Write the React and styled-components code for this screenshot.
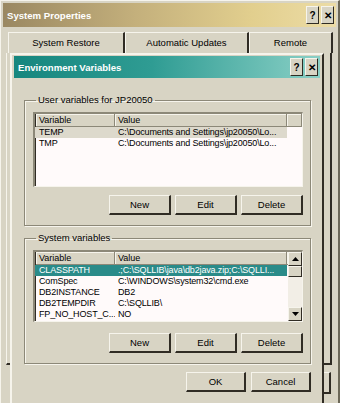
import React from 'react';
import styled, { createGlobalStyle } from 'styled-components';

const GlobalStyle = createGlobalStyle`
  html, body {
    margin: 0;
    padding: 0;
    background: #d8d4c4;
  }
  body {
    font-family: "Liberation Sans", Arial, sans-serif;
    font-size: 9px;
    color: #000;
  }
`;

const FACE = '#d8d4c4';
const LIGHT = '#f6f4ec';
const SHADOW = '#8c8878';
const DARK = '#302c24';

const OuterWindow = styled.div`
  position: relative;
  width: 340px;
  height: 403px;
  box-sizing: border-box;
  background: ${FACE};
  border-left: 1px solid ${LIGHT};
  border-top: 1px solid ${LIGHT};
  border-right: 2px solid #6c6858;
  padding: 2px 2px 0 2px;
  display: flex;
  flex-direction: column;
  overflow: hidden;
`;

const TitleBar = styled.div`
  height: ${p => p.$h}px;
  flex-shrink: 0;
  display: flex;
  align-items: center;
  padding: 0 2px 0 3px;
  background: ${p => p.$teal
    ? 'linear-gradient(90deg, #16867e 0%, #2f9c93 45%, #8ad0c6 100%)'
    : 'linear-gradient(90deg, #9a8862 0%, #c4b07c 40%, #e2cf8e 75%, #ecdca6 100%)'};
`;

const TitleText = styled.span`
  flex: 1;
  color: #fff;
  font-weight: bold;
  font-size: 9.6px;
  padding-left: 1px;
`;

const CaptionButton = styled.div`
  width: 13px;
  height: 18px;
  margin-left: 2px;
  box-sizing: border-box;
  background: ${FACE};
  border-top: 1px solid ${LIGHT};
  border-left: 1px solid ${LIGHT};
  border-right: 1px solid ${DARK};
  border-bottom: 1px solid ${DARK};
  display: flex;
  align-items: center;
  justify-content: center;
  font-weight: bold;
  font-size: 10px;
  color: #000;
`;

const TabRow = styled.div`
  height: 21px;
  margin-top: 5px;
  display: flex;
  padding-left: 5px;
  flex-shrink: 0;
`;

const Tab = styled.div`
  width: ${p => p.$w}px;
  box-sizing: border-box;
  border-top: 1px solid ${LIGHT};
  border-left: 1px solid ${LIGHT};
  border-right: 2px solid ${DARK};
  display: flex;
  align-items: center;
  justify-content: center;
  padding-bottom: 2px;
  font-size: 9.5px;
`;

const TabPage = styled.div`
  height: 312px;
  margin: 0 4px 0 3px;
  box-sizing: border-box;
  border-left: 1px solid ${LIGHT};
  border-right: 2px solid ${DARK};
  border-bottom: 2px solid ${DARK};
  flex-shrink: 0;
`;

const PageButtons = styled.div`
  display: flex;
  justify-content: flex-end;
  margin: 7px 5px 0 0;
`;

const PageButton = styled.div`
  width: 80px;
  height: 22px;
  box-sizing: border-box;
  border-left: 1px solid ${LIGHT};
  border-top: 1px solid ${LIGHT};
  border-right: 2px solid ${DARK};
  border-bottom: 2px solid ${DARK};
`;

const Dialog = styled.div`
  position: absolute;
  left: 9px;
  top: 52px;
  width: 314px;
  height: 352px;
  box-sizing: border-box;
  background: ${FACE};
  border-left: 2px solid ${LIGHT};
  border-top: 2px solid ${LIGHT};
  border-right: 2px solid ${DARK};
  border-bottom: 2px solid ${DARK};
  padding: 1px 2px 2px 2px;
  display: flex;
  flex-direction: column;
`;

const DialogBody = styled.div`
  padding: 17px 9px 0 10px;
  display: flex;
  flex-direction: column;
`;

const Group = styled.fieldset`
  margin: 0 0 ${p => p.$mb}px 0;
  padding: 7px 7px 10px 8px;
  border: 1px solid ${SHADOW};
  box-shadow: inset 1px 1px 0 ${LIGHT}, 1px 1px 0 ${LIGHT};
  display: flex;
  flex-direction: column;
  min-width: 0;
`;

const Legend = styled.legend`
  padding: 0 2px 0 2px;
  margin-left: 3px;
  font-size: 9.5px;
  line-height: 10px;
`;

const ListView = styled.div`
  position: relative;
  height: ${p => p.$h}px;
  box-sizing: border-box;
  background: #fffafa;
  border-top: 2px solid ${SHADOW};
  border-left: 2px solid ${SHADOW};
  border-right: 1px solid ${LIGHT};
  border-bottom: 1px solid ${LIGHT};
  box-shadow: inset 1px 1px 0 ${DARK};
  overflow: hidden;
`;

const HeaderRow = styled.div`
  display: grid;
  grid-template-columns: 79px 172px 1fr;
  height: 13px;
  padding-left: 1px;
`;

const HeaderCell = styled.div`
  height: 13px;
  box-sizing: border-box;
  background: ${FACE};
  border-right: 1px solid ${SHADOW};
  border-bottom: 1px solid ${SHADOW};
  box-shadow: inset 1px 1px 0 ${LIGHT};
  padding-left: 3px;
  line-height: 12px;
  font-size: 9px;
  white-space: nowrap;
  overflow: hidden;
`;

const Row = styled.div`
  display: grid;
  grid-template-columns: 79px 172px;
  height: 11px;
  line-height: 11px;
  padding-left: 1px;
  font-size: 9px;
  letter-spacing: -0.15px;
  width: 251px;
  background: ${p => (p.$sel === 'focus' ? '#2a8b89' : p.$sel === 'gray' ? '#ddd9cc' : 'transparent')};
  color: ${p => (p.$sel === 'focus' ? '#fff' : '#000')};
`;

const Cell = styled.div`
  padding-left: 3px;
  white-space: nowrap;
  overflow: hidden;
`;

const ScrollBar = styled.div`
  position: absolute;
  right: 0;
  top: 0;
  bottom: 0;
  width: 14px;
  background: #f2eee6;
  display: flex;
  flex-direction: column;
  justify-content: space-between;
`;

const ScrollBtn = styled.div`
  height: 14px;
  box-sizing: border-box;
  background: ${FACE};
  border-top: 1px solid ${LIGHT};
  border-left: 1px solid ${LIGHT};
  border-right: 1px solid ${DARK};
  border-bottom: 1px solid ${DARK};
  display: flex;
  align-items: center;
  justify-content: center;
`;

const Thumb = styled(ScrollBtn)`
  height: 11px;
`;

const ScrollTop = styled.div`
  display: flex;
  flex-direction: column;
`;

const ButtonRow = styled.div`
  display: flex;
  justify-content: flex-end;
  gap: ${p => p.$gap || 4}px;
  margin-top: ${p => p.$mt}px;
`;

const Button = styled.div`
  width: ${p => p.$w || 62}px;
  height: 20px;
  box-sizing: border-box;
  background: ${FACE};
  border-top: 1px solid ${LIGHT};
  border-left: 1px solid ${LIGHT};
  border-right: 2px solid ${DARK};
  border-bottom: 2px solid ${DARK};
  display: flex;
  align-items: center;
  justify-content: center;
  font-size: 9.5px;
`;

const Arrow = ({ up }) => (
  <svg width="7" height="4" viewBox="0 0 7 4">
    <polygon points={up ? '3.5,0 7,4 0,4' : '0,0 7,0 3.5,4'} fill="#000" />
  </svg>
);

const userVars = [
  ['TEMP', 'C:\\Documents and Settings\\jp20050\\Lo...', 'gray'],
  ['TMP', 'C:\\Documents and Settings\\jp20050\\Lo...'],
];

const sysVars = [
  ['CLASSPATH', '.;C:\\SQLLIB\\java\\db2java.zip;C:\\SQLLI...', 'focus'],
  ['ComSpec', 'C:\\WINDOWS\\system32\\cmd.exe'],
  ['DB2INSTANCE', 'DB2'],
  ['DB2TEMPDIR', 'C:\\SQLLIB\\'],
  ['FP_NO_HOST_C...', 'NO'],
];

function VarList({ rows, height, scroll }) {
  return (
    <ListView $h={height}>
      <HeaderRow>
        <HeaderCell>Variable</HeaderCell>
        <HeaderCell>Value</HeaderCell>
        <HeaderCell />
      </HeaderRow>
      {rows.map(([name, value, sel]) => (
        <Row key={name} $sel={sel}>
          <Cell>{name}</Cell>
          <Cell>{value}</Cell>
        </Row>
      ))}
      {scroll && (
        <ScrollBar>
          <ScrollTop>
            <ScrollBtn><Arrow up /></ScrollBtn>
            <Thumb />
          </ScrollTop>
          <ScrollBtn><Arrow /></ScrollBtn>
        </ScrollBar>
      )}
    </ListView>
  );
}

function ActionButtons({ mt }) {
  return (
    <ButtonRow $mt={mt}>
      <Button>New</Button>
      <Button>Edit</Button>
      <Button>Delete</Button>
    </ButtonRow>
  );
}

export default function App() {
  return (
    <>
      <GlobalStyle />
      <OuterWindow>
        <TitleBar $h={24}>
          <TitleText>System Properties</TitleText>
          <CaptionButton>?</CaptionButton>
          <CaptionButton>✕</CaptionButton>
        </TitleBar>
        <TabRow>
          <Tab $w={117}>System Restore</Tab>
          <Tab $w={124}>Automatic Updates</Tab>
          <Tab $w={84}>Remote</Tab>
        </TabRow>
        <TabPage />
        <PageButtons>
          <PageButton />
        </PageButtons>

        <Dialog>
          <TitleBar $h={22} $teal>
            <TitleText>Environment Variables</TitleText>
            <CaptionButton>?</CaptionButton>
            <CaptionButton>✕</CaptionButton>
          </TitleBar>
          <DialogBody>
            <Group $mb={7}>
              <Legend>User variables for JP20050</Legend>
              <VarList rows={userVars} height={75} />
              <ActionButtons mt={8} />
            </Group>
            <Group $mb={8}>
              <Legend>System variables</Legend>
              <VarList rows={sysVars} height={72} scroll />
              <ActionButtons mt={11} />
            </Group>
            <ButtonRow $gap={5} $mt={0}>
              <Button $w={60}>OK</Button>
              <Button $w={60}>Cancel</Button>
            </ButtonRow>
          </DialogBody>
        </Dialog>
      </OuterWindow>
    </>
  );
}
